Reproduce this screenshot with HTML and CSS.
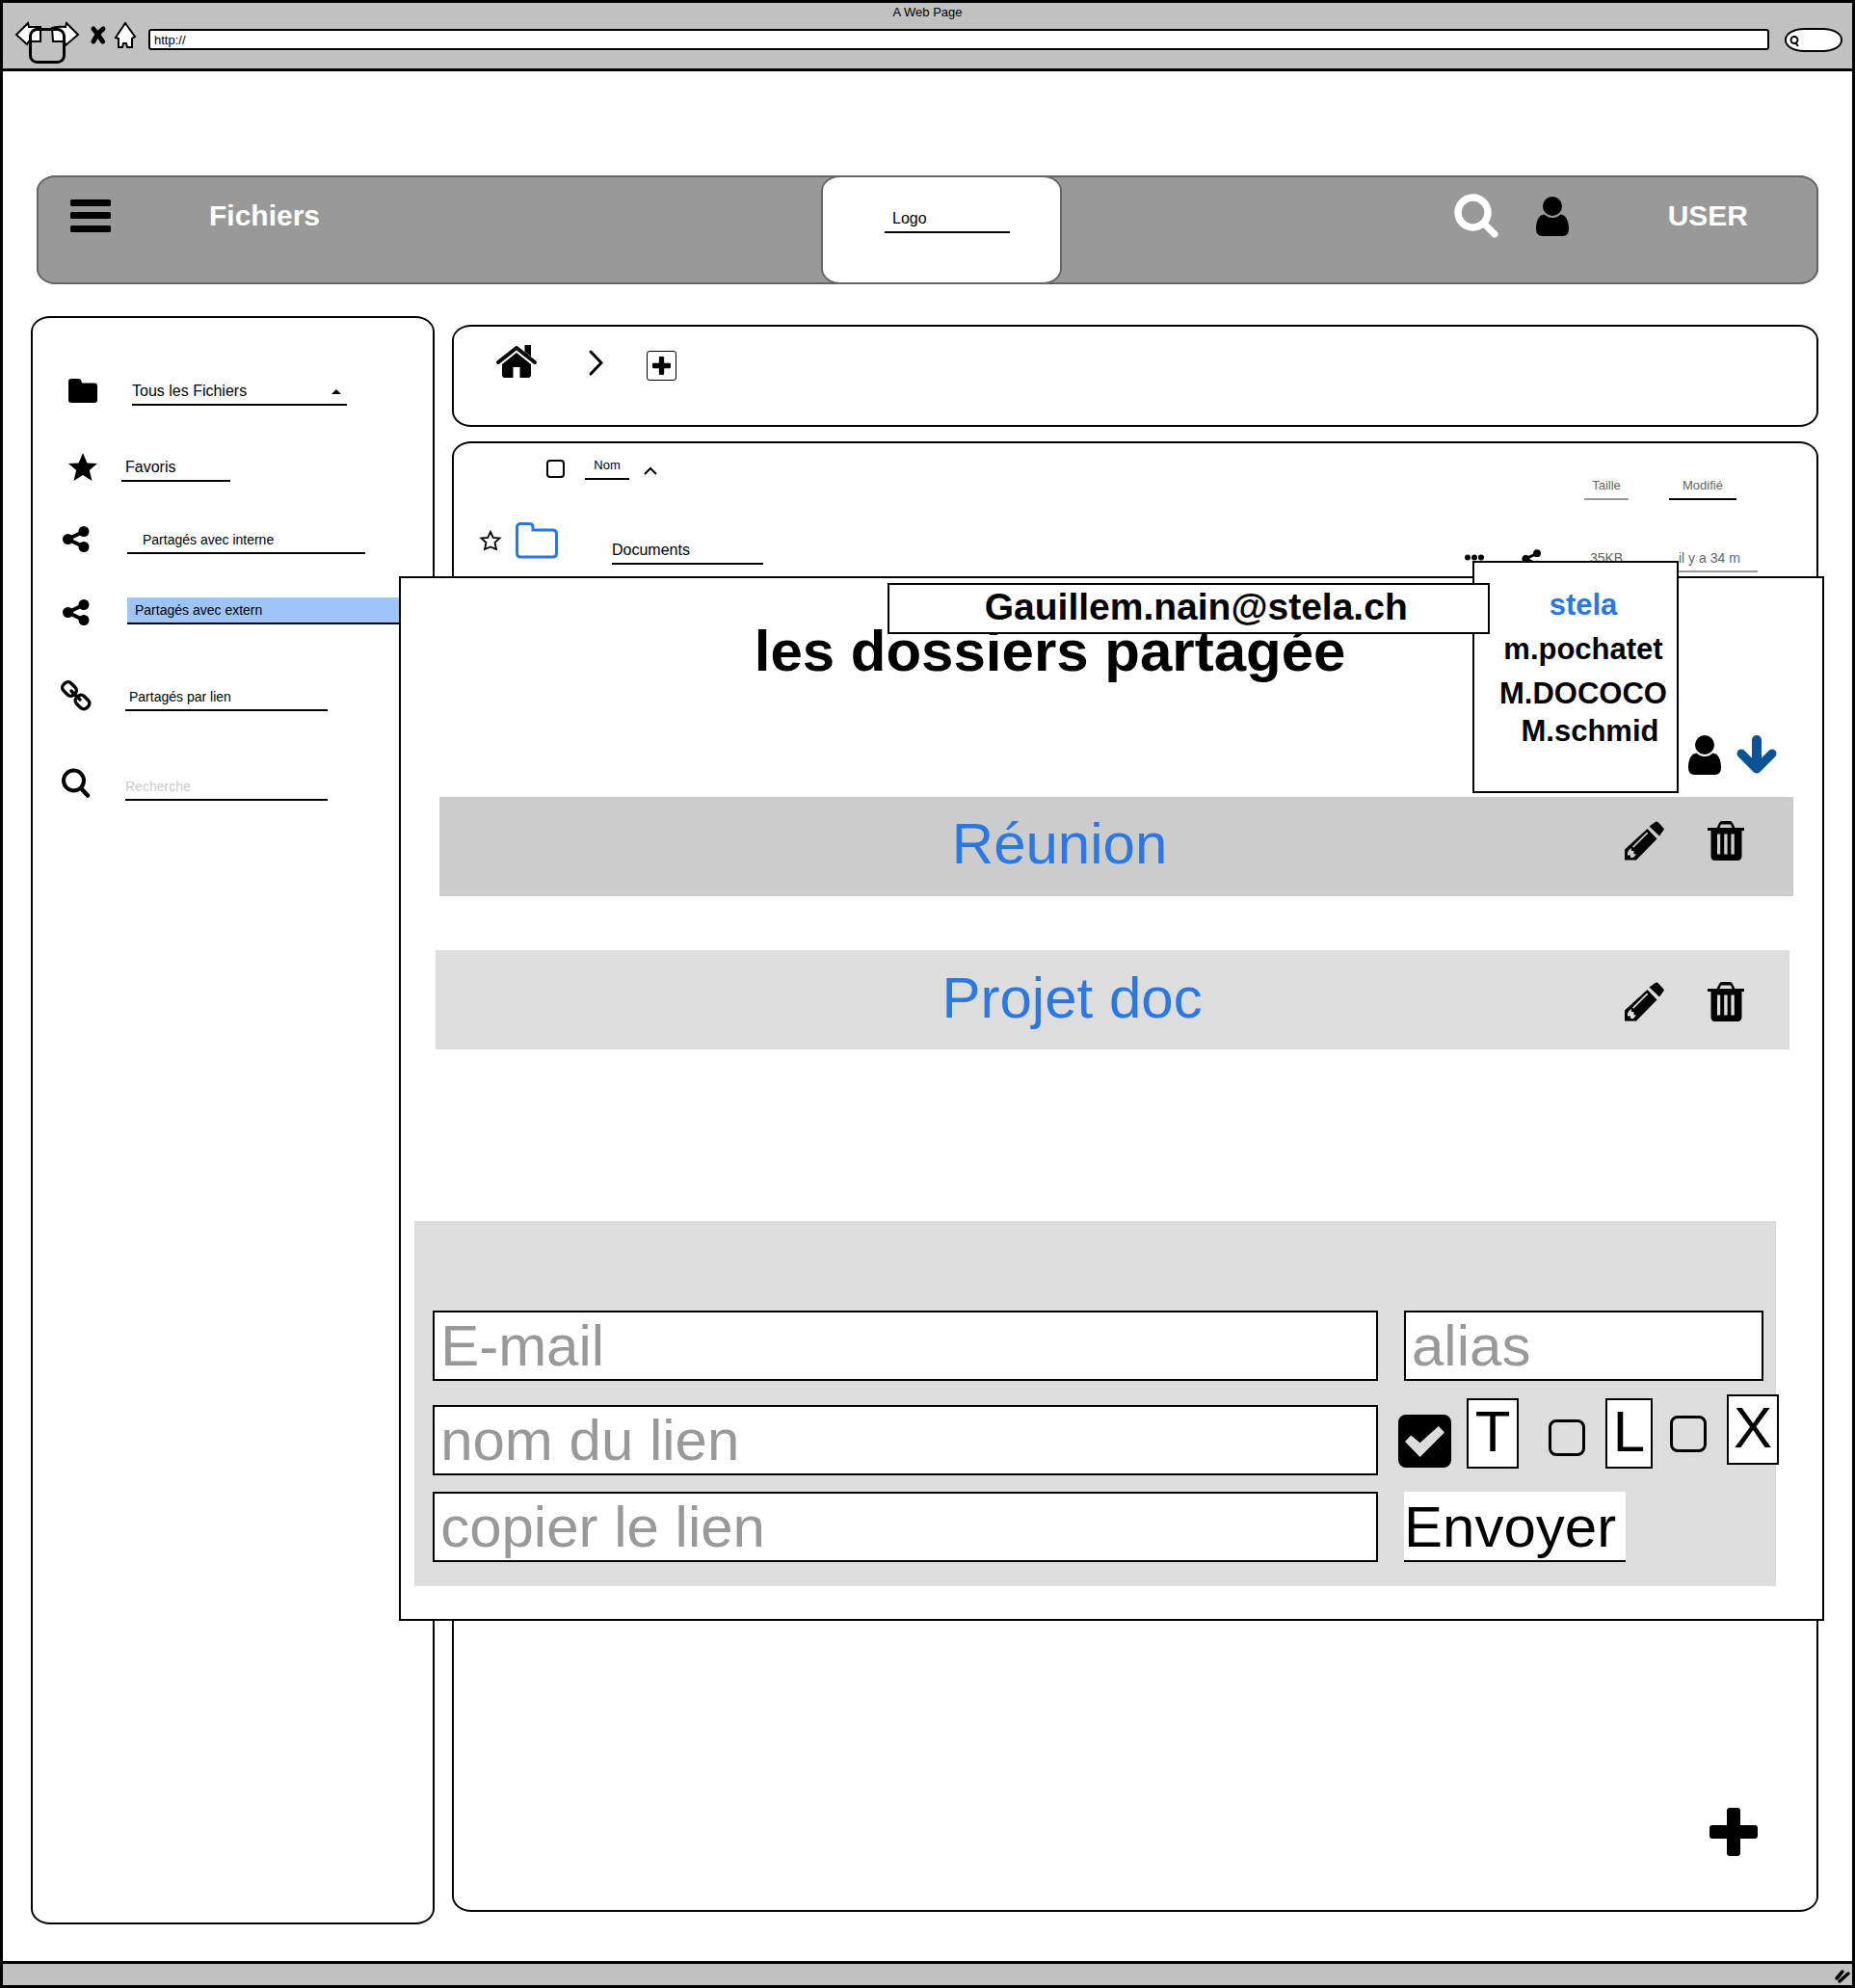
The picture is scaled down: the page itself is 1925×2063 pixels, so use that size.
FILE: index.html
```html
<!DOCTYPE html>
<html lang="fr">
<head>
<meta charset="utf-8">
<title>A Web Page</title>
<link rel="stylesheet" href="styles.css">
</head>
<body>
<svg class="sprite" aria-hidden="true">
  <symbol id="i-user" viewBox="0 0 34 41"><circle cx="17" cy="10" r="10"/><path d="M8.500 18.500Q12.500 22 17 22T25.500 18.500C31 19 34 25 34 33.500Q34 41 27.500 41H6.500Q0 41 0 33.500C0 25 3 19 8.500 18.500Z"/></symbol>
  <symbol id="i-share" viewBox="0 0 38 32"><path d="M24 8.500L7.500 16.500L24 24.500" fill="none" stroke="currentColor" stroke-width="4"/><circle cx="7.500" cy="16.500" r="5.500"/><circle cx="24" cy="8.500" r="5.500"/><circle cx="24" cy="24.500" r="5.500"/></symbol>
  <symbol id="i-pencil" viewBox="0 0 41 41"><path d="M29 3L32 .8Q33.500 0 35 1.500L40 7Q41.500 8.500 40 10L36 15.500L25.500 5.500Z"/><path fill-rule="evenodd" d="M23.500 8L33.500 18.500L12 40.500H0V29.500ZM23 11.500L8 26.500L9.200 27.700L24.200 12.700ZM4.500 30L3 32.500V35.500H6V38H9L12 34.500L9.500 34V31H7V28Z"/></symbol>
  <symbol id="i-trash" viewBox="0 0 38 41"><path fill-rule="evenodd" d="M0 7H9.500L12 2Q13 0 15 0H23Q25 0 26 2L28.500 7H38V10H35.500V36Q35.500 41 31 41H7.500Q3.500 41 3.500 36V10H0ZM12.500 7H25.500L24 3.500H14ZM10 13.500V34.500H13.200V13.500ZM17.200 13.500V34.500H20.600V13.500ZM24.400 13.500V34.500H27.800V13.500Z"/></symbol>
  <symbol id="i-plus" viewBox="0 0 50 50"><path d="M21 0H29Q32 0 32 3V18H47Q50 18 50 21V29Q50 32 47 32H32V47Q32 50 29 50H21Q18 50 18 47V32H3Q0 32 0 29V21Q0 18 3 18H18V3Q18 0 21 0Z"/></symbol>
</svg>

<div class="browser">
  <header class="chrome">
    <div class="chrome-title">A Web Page</div>
    <div class="chrome-bar">
      <button class="chrome-nav" aria-label="Navigation">
        <svg width="66" height="48" viewBox="0 0 66 48" stroke="#000" stroke-width="2"><path d="M1 15L13 3L14 7H26V22H14L12 25Z" fill="#fff"/><path d="M65 15L53 3L52 7Q45 6 38 8L39 22H51L52 26Z" fill="#fff"/><rect x="15.500" y="9.500" width="35" height="34" rx="7" fill="none" stroke-width="3"/></svg>
      </button>
      <button class="chrome-stop" aria-label="Arrêter">
        <svg width="16" height="20" viewBox="0 0 16 20" fill="none" stroke="#000" stroke-width="5" stroke-linecap="round"><path d="M3 3Q8 9 12.500 16M13 3Q7 8 3 16"/></svg>
      </button>
      <button class="chrome-home" aria-label="Accueil">
        <svg width="22" height="28" viewBox="0 0 22 28" fill="#fff" stroke="#000" stroke-width="2"><path d="M11 1L21 15L18 17V26H13L12 22H9L8 26H4V17L1 16Z"/></svg>
      </button>
      <input class="chrome-url" type="text" value="http://" aria-label="Adresse">
      <div class="chrome-search">
        <svg width="10" height="12" viewBox="0 0 10 12" fill="none" stroke="#000" stroke-width="2"><circle cx="5" cy="4.500" r="3.500"/><path d="M6 7L9 11"/></svg>
      </div>
    </div>
  </header>

  <div class="topbar">
    <div class="topbar-left">
      <button class="burger" aria-label="Menu">
        <svg width="42" height="34" viewBox="0 0 42 34"><rect width="42" height="7" rx="1.500"/><rect y="13" width="42" height="7" rx="1.500"/><rect y="27" width="42" height="7" rx="1.500"/></svg>
      </button>
      <h1 class="topbar-text">Fichiers</h1>
    </div>
    <div class="logo-box"><a class="field logo" href="#">Logo</a></div>
    <div class="topbar-right">
      <button class="top-search" aria-label="Rechercher">
        <svg width="46" height="46" viewBox="0 0 46 46" fill="none" stroke="#fff" stroke-linecap="round"><circle cx="19.500" cy="19.500" r="15.500" stroke-width="7.500"/><path d="M31 31L42 42" stroke-width="7"/></svg>
      </button>
      <svg class="top-user" width="34" height="41"><use href="#i-user"/></svg>
      <span class="topbar-text">USER</span>
    </div>
  </div>

  <div class="workspace">
    <nav class="sidebar">
      <div class="side-row">
        <svg width="38" height="32" viewBox="0 0 38 32"><path d="M11 4H18Q21 4 21.500 6.500L22 8.500H35Q38 8.500 38 11.500V26Q38 29 35 29H11Q8 29 8 26V7Q8 4 11 4Z"/></svg>
        <div class="field side-all"><select aria-label="Dossier"><option>Tous les Fichiers</option></select></div>
      </div>
      <div class="side-row">
        <svg width="38" height="32" viewBox="0 0 38 32"><path d="M23 2L27.400 12.400L38 13L29.800 20L32.500 31L23 25L13.500 31L16.200 20L8 13L18.600 12.400Z"/></svg>
        <a class="field side-fav" href="#">Favoris</a>
      </div>
      <div class="side-row">
        <svg width="38" height="32"><use href="#i-share"/></svg>
        <a class="field side-intern" href="#">Partagés avec interne</a>
      </div>
      <div class="side-row">
        <svg width="38" height="30"><use href="#i-share" y="1" height="32"/></svg>
        <a class="field side-extern" href="#" aria-current="page">Partagés avec extern</a>
      </div>
      <div class="side-row">
        <svg width="38" height="32" viewBox="0 0 38 32" fill="none" stroke="#000" stroke-width="3.400" stroke-linecap="round"><rect x="-7.500" y="-5.500" width="15" height="11" rx="4.500" transform="translate(9 9) rotate(45)"/><rect x="-7.500" y="-5.500" width="15" height="11" rx="4.500" transform="translate(22.500 22.500) rotate(45)"/><path d="M11 11L20 20"/></svg>
        <a class="field side-link" href="#">Partagés par lien</a>
      </div>
      <div class="side-row">
        <svg width="38" height="32" viewBox="0 0 38 32" fill="none" stroke="#000" stroke-linecap="round"><circle cx="13.500" cy="11" r="10.500" stroke-width="4"/><path d="M21 19L28 26.500" stroke-width="4.500"/></svg>
        <input class="field side-search" type="text" placeholder="Recherche" aria-label="Recherche">
      </div>
    </nav>

    <main class="main">
      <div class="panel crumbs">
        <a href="#" aria-label="Accueil"><svg width="42" height="34" viewBox="0 0 42 34"><path d="M2 18L21 3L40 18" fill="none" stroke="#000" stroke-width="4" stroke-linecap="round" stroke-linejoin="round"/><path d="M29.500 0H36V12L29.500 7Z"/><path d="M21 8L36 20V31Q36 34 33 34H24.500V23H17.500V34H9Q6 34 6 31V20Z"/></svg></a>
        <svg width="15" height="27" viewBox="0 0 15 27" fill="none" stroke="#000" stroke-width="3" stroke-linecap="round"><path d="M2 2L13 13.500L2 25"/></svg>
        <button class="add" aria-label="Ajouter"><svg width="19" height="19"><use href="#i-plus"/></svg></button>
      </div>

      <div class="panel files">
        <table class="file-table">
          <colgroup><col class="c-fav"><col class="c-icon"><col><col class="c-act"><col class="c-size"><col class="c-date"></colgroup>
          <thead>
            <tr>
              <td></td>
              <td><input class="tick" type="checkbox" aria-label="Tout sélectionner"></td>
              <th class="h-name"><div class="sort"><span class="field">Nom</span><svg width="14" height="9" viewBox="0 0 14 9" fill="none" stroke="#000" stroke-width="2"><path d="M1 8L7 2L13 8"/></svg></div></th>
              <td></td>
              <th class="h-low"><span class="field f-size">Taille</span></th>
              <th class="h-low"><span class="field f-date">Modifié</span></th>
            </tr>
          </thead>
          <tbody>
            <tr>
              <td><svg width="22" height="22" viewBox="0 0 22 22" fill="none" stroke="#000" stroke-width="1.800"><path d="M11 2L13.800 8L20.500 8.500L15.500 13L17 20L11 17.500L5 20L6.500 13L1.500 8.500L8.200 8Z"/></svg></td>
              <td><svg width="44" height="38" viewBox="0 0 44 38" fill="none" stroke="#2b78e4" stroke-width="3"><path d="M5.500 2.500H14Q18 2.500 18 6V9H38.500Q42.500 9 42.500 13V33Q42.500 37 38.500 37H5.500Q1.500 37 1.500 33V6.500Q1.500 2.500 5.500 2.500Z"/></svg></td>
              <td class="d-name"><a class="field" href="#">Documents</a></td>
              <td class="d-act"><svg width="20" height="7" viewBox="0 0 20 7"><circle cx="3" cy="3.500" r="3"/><circle cx="10" cy="3.500" r="3"/><circle cx="17" cy="3.500" r="3"/></svg><svg width="27" height="23"><use href="#i-share"/></svg></td>
              <td class="d-text"><span class="field f-kb">35KB</span></td>
              <td class="d-text"><span class="field f-ago">il y a 34 m</span></td>
            </tr>
          </tbody>
        </table>
        <button class="fab" aria-label="Nouveau"><svg width="50" height="50"><use href="#i-plus"/></svg></button>
      </div>
    </main>

    <section class="modal">
      <h2 class="modal-title">les dossiers partagée</h2>
      <div class="modal-tools">
        <svg width="34" height="41"><use href="#i-user"/></svg>
        <button aria-label="Dérouler"><svg width="42" height="41" viewBox="0 0 42 41" fill="none" stroke="#0b5394" stroke-linecap="round" stroke-linejoin="round"><path d="M21 5V32" stroke-width="10"/><path d="M5 19L21 35L37 19" stroke-width="9"/></svg></button>
      </div>

      <div class="share-row share-row-a">
        <a href="#">Réunion</a>
        <button aria-label="Modifier Réunion"><svg width="41" height="41"><use href="#i-pencil"/></svg></button>
        <button aria-label="Supprimer Réunion"><svg width="38" height="41"><use href="#i-trash"/></svg></button>
      </div>
      <div class="share-row share-row-b">
        <a href="#">Projet doc</a>
        <button aria-label="Modifier Projet doc"><svg width="41" height="41"><use href="#i-pencil"/></svg></button>
        <button aria-label="Supprimer Projet doc"><svg width="38" height="41"><use href="#i-trash"/></svg></button>
      </div>

      <form class="share-form">
        <input class="box" type="email" placeholder="E-mail" aria-label="E-mail">
        <input class="box" type="text" placeholder="alias" aria-label="alias">
        <input class="box" type="text" placeholder="nom du lien" aria-label="nom du lien">
        <div class="rights">
          <label class="right right-t"><input type="checkbox" checked><span>T</span></label>
          <label class="right right-l"><input type="checkbox"><span>L</span></label>
          <label class="right right-x"><input type="checkbox"><span>X</span></label>
        </div>
        <input class="box" type="text" placeholder="copier le lien" aria-label="copier le lien">
        <button class="send" type="button">Envoyer</button>
      </form>

      <ul class="people">
        <li><a class="active" href="#">stela</a></li>
        <li><a href="#">m.pochatet</a></li>
        <li><a href="#">M.DOCOCO</a></li>
        <li><a href="#">M.schmid</a></li>
      </ul>
      <div class="mail-tip">Gauillem.nain@stela.ch</div>
    </section>
  </div>

  <footer class="statusbar">
    <svg width="16" height="14" viewBox="0 0 16 14" stroke="#000" stroke-width="3.500" stroke-linecap="round"><path d="M2 9L8 2M5 12L14 4"/></svg>
  </footer>
</div>
</body>
</html>
```

FILE: styles.css
```css
* { box-sizing: border-box; }

body {
  margin: 0;
  background: #fff;
  color: #000;
  font-family: "Liberation Sans", Arial, sans-serif;
  font-size: 16px;
  line-height: 18px;
}

a { color: inherit; text-decoration: none; }
button, input, select { font: inherit; color: inherit; border-radius: 0; }
button { display: flex; padding: 0; border: 0; background: none; }
svg { display: block; flex: none; overflow: visible; }
h1, h2, ul { margin: 0; padding: 0; }

.sprite { position: absolute; width: 0; height: 0; }

/* Browser window */
.browser {
  display: flex;
  flex-direction: column;
  min-height: 100vh;
  border: 3px solid #000;
}
.chrome {
  height: 71px;
  padding-top: 2px;
  background: #c1c1c1;
  border-bottom: 3px solid #000;
}
.chrome-title { font-size: 13px; line-height: 16px; text-align: center; }
.chrome-bar {
  display: flex;
  align-items: center;
  height: 48px;
  padding: 0 10px 8px 13px;
}
.chrome-nav { align-self: flex-start; height: 40px; margin-right: 12px; }
.chrome-stop { margin-right: 9px; padding-bottom: 8px; }
.chrome-home { margin-right: 13px; padding-bottom: 8px; }
.chrome-url {
  flex: 1;
  height: 22px;
  padding: 0 4px;
  border: 2px solid #000;
  border-radius: 3px;
  background: #fff;
  font-size: 13px;
}
.chrome-search {
  width: 60px;
  height: 25px;
  margin-left: 16px;
  padding: 6px 3px;
  border: 2px solid #000;
  border-radius: 20px / 12px;
  background: #fff;
}

/* Application header */
.topbar {
  display: grid;
  grid-template-columns: 814fr 250px 785fr;
  height: 113px;
  margin: 108px 35px 0;
  background: #999;
  box-shadow: inset 0 0 0 2px #666;
  border-radius: 20px / 16px;
}
.topbar-left, .topbar-right { display: flex; align-items: center; padding-bottom: 29px; }
.topbar-left { padding-left: 35px; gap: 102px; }
.topbar-right { justify-content: flex-end; padding-right: 73px; }
.topbar-text { color: #fff; font-size: 30px; font-weight: bold; line-height: 36px; }
.top-search { margin-right: 39px; }
.top-user { margin-right: 103px; }
.logo-box {
  padding: 34px 52px 0 64px;
  background: #fff;
  border: 2px solid #666;
  border-radius: 20px / 16px;
}

/* Underlined text */
.field {
  display: block;
  padding: 0 0 4px;
  border: 0 solid #000;
  border-bottom-width: 2px;
  background: none;
  line-height: 18px;
}
.logo { padding-left: 8px; }

/* Workspace */
.workspace {
  position: relative;
  flex: 1;
  display: grid;
  grid-template-columns: 419fr 1418fr;
  gap: 18px;
  margin: 33px 35px 38px 29px;
}
.sidebar, .panel { border: 2px solid #000; border-radius: 20px / 16px; }
.sidebar {
  display: grid;
  grid-template-rows: 32px 79px 75px 73px 90px 93px;
  align-content: start;
  align-items: end;
  padding: 59px 10px 0 29px;
}
.side-row { display: flex; align-items: flex-end; font-size: 14px; }
.side-all { position: relative; width: 223px; margin-left: 36px; font-size: 16px; }
.side-all select {
  display: block;
  width: 100%;
  height: 18px;
  padding: 0;
  border: 0;
  background: none;
  appearance: none;
}
.side-all::after {
  content: "";
  position: absolute;
  right: 6px;
  top: 7px;
  border: 5px solid transparent;
  border-top-width: 0;
  border-bottom-color: #000;
}
.side-fav { width: 113px; margin-left: 25px; padding-left: 4px; font-size: 16px; }
.side-intern { width: 247px; margin-left: 31px; padding-left: 16px; }
.side-extern { flex: 1; margin-left: 31px; padding: 4px 0 4px 8px; background: #9fc5f8; }
.side-link { width: 210px; margin-left: 29px; padding-left: 4px; }
.side-search { width: 210px; height: 24px; margin-left: 29px; }
.side-search::placeholder { color: #ccc; opacity: 1; }

.main { display: flex; flex-direction: column; gap: 15px; padding: 9px 0 13px; }
.crumbs { display: flex; align-items: flex-start; height: 106px; padding: 19px 44px; }
.crumbs > svg { margin: 5px 45px 0 54px; }
.add {
  align-items: center;
  justify-content: center;
  width: 31px;
  height: 31px;
  margin-top: 6px;
  border: 1px solid #000;
  border-radius: 3px;
}

.files { flex: 1; display: flex; flex-direction: column; padding: 14px 61px 56px 27px; }
.file-table { width: 100%; table-layout: fixed; border-collapse: collapse; }
.file-table td, .file-table th { padding: 0; font-weight: normal; text-align: center; vertical-align: top; }
.file-table tbody td { padding-top: 22px; }
.c-fav { width: 37px; }
.c-icon { width: 72px; }
.c-act { width: 124px; }
.c-size { width: 88px; }
.c-date { width: 92px; }
.tick {
  display: block;
  appearance: none;
  width: 19px;
  height: 19px;
  margin: 3px 0 0 32px;
  border: 2px solid #000;
  border-radius: 4px;
}
.file-table th { font-size: 13px; }
.sort { display: flex; align-items: center; gap: 15px; }
.sort .field { width: 46px; }
.sort svg { margin-top: 4px; }
.file-table .h-low { padding-top: 21px; color: #666; }
.f-size { width: 46px; border-color: #999; }
.f-date { width: 70px; }
.file-table tbody td:first-child { padding-top: 31px; }
.d-name .field { width: 157px; margin-left: 28px; text-align: left; }
.file-table .d-name { padding-top: 43px; }
.d-act svg { float: left; }
.file-table .d-act { padding-top: 56px; }
.d-act svg + svg { margin: -7px 0 0 38px; }
.file-table .d-text { padding-top: 51px; color: #666; font-size: 14px; }
.f-kb { width: 46px; border-color: #999; }
.f-ago { padding-left: 10px; text-align: left; border-color: #999; }
.fab { margin: auto 0 0 auto; }

/* Share dialog */
.modal {
  position: absolute;
  top: 270px;
  left: 20.6%;
  right: -6px;
  padding: 42px 30px 34px 14px;
  background: #fff;
  border: 2px solid #000;
}
.modal-title { padding-right: 112px; font-size: 60px; line-height: 68px; text-align: center; }
.modal-tools { display: flex; justify-content: flex-end; gap: 16px; margin: 53px 17px 23px 0; }
.share-row {
  display: flex;
  align-items: center;
  gap: 45px;
  height: 103px;
  color: #2b78e4;
  font-size: 60px;
  line-height: 68px;
}
.share-row a { flex: 1; text-align: center; }
.share-row button { color: #000; }
.share-row-a { margin-left: 26px; padding: 0 51px 12px 102px; background: #ccc; }
.share-row-a a { padding-top: 6px; }
.share-row-b { margin: 56px 4px 0 22px; padding: 4px 47px 0 132px; background: #ddd; }
.share-row-b a { padding-bottom: 8px; }

.share-form {
  display: grid;
  grid-template-columns: 981fr 373fr;
  grid-template-rows: 73px 98px 90px;
  column-gap: 27px;
  align-items: end;
  margin: 178px 18px 0 0;
  padding: 93px 13px 25px 19px;
  background: #ddd;
  font-size: 60px;
  line-height: 68px;
}
.box {
  width: 100%;
  min-width: 0;
  height: 73px;
  padding: 0 6px;
  border: 2px solid #000;
  background: #fff;
}
.box::placeholder { color: #999; opacity: 1; }
.rights { display: flex; align-items: flex-end; margin: 0 -16px 0 -6px; padding-bottom: 7px; }
.right { display: flex; align-items: center; gap: 21px; }
.right span {
  width: 54px;
  height: 73px;
  border: 2px solid #000;
  background: #fff;
  line-height: 65px;
  text-align: center;
}
.right input {
  appearance: none;
  flex: none;
  width: 38px;
  height: 38px;
  margin: 8px 0 0;
  border: 3px solid #000;
  border-radius: 8px;
}
.right-t { gap: 16px; }
.right-t input { width: 55px; height: 55px; margin-top: 16px; }
.right input:checked { background: #000; }
.right input:checked::before {
  content: "";
  display: block;
  width: 41px;
  height: 32px;
  margin: 9px 4px;
  background: #ddd;
  clip-path: polygon(0 50%, 15% 30%, 38% 54%, 85% 0, 100% 20%, 38% 100%);
}
.right-l { margin-left: 31px; }
.right-l span { width: 49px; }
.right-x { margin-left: 18px; padding-bottom: 4px; }
.send {
  align-items: center;
  width: 230px;
  height: 73px;
  padding-top: 2px;
  background: #fff;
  border-bottom: 2px solid #000;
}

/* Floating over the dialog */
.people {
  position: absolute;
  top: -18px;
  right: 149px;
  width: 214px;
  height: 241px;
  padding: 21px 0 0 16px;
  background: #fff;
  border: 2px solid #000;
  list-style: none;
  font-size: 31px;
  font-weight: bold;
  line-height: 46px;
  text-align: center;
}
.people li:last-child { padding-left: 14px; line-height: 32px; }
.people .active { color: #2b78e4; }
.mail-tip {
  position: absolute;
  top: 5px;
  left: 34.2%;
  width: 42.4%;
  height: 53px;
  padding-left: 16px;
  background: #fff;
  border: 2px solid #000;
  font-size: 39px;
  font-weight: bold;
  line-height: 46px;
  text-align: center;
}

.statusbar {
  display: flex;
  justify-content: flex-end;
  height: 25px;
  padding: 6px 2px 0 0;
  background: #c1c1c1;
  border-top: 3px solid #000;
}
```
